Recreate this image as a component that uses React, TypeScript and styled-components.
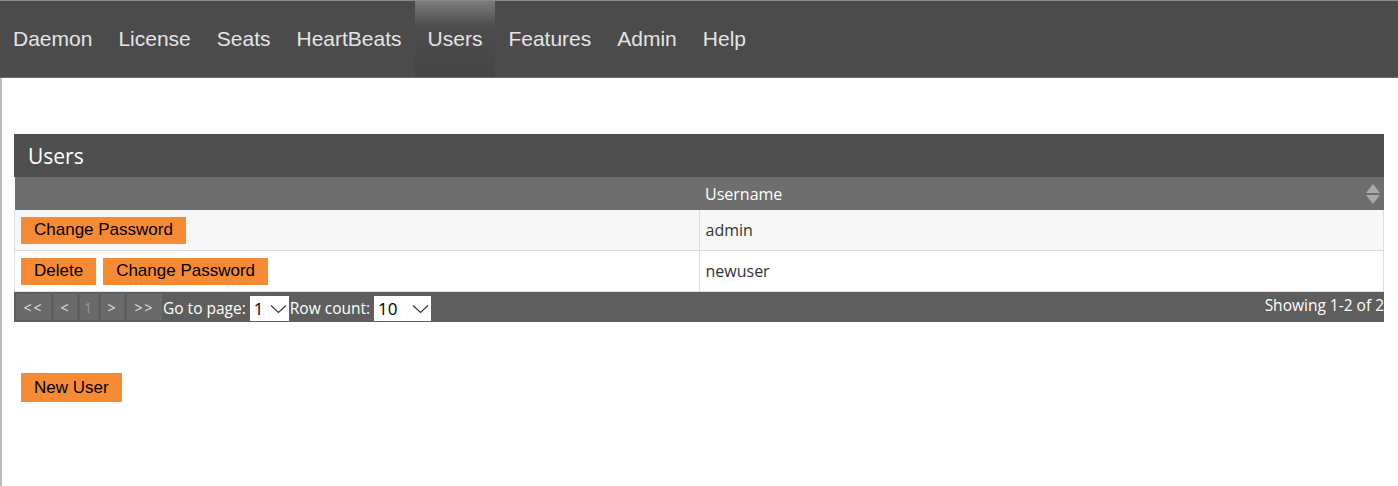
import styled, { createGlobalStyle } from "styled-components";

const GlobalStyle = createGlobalStyle`
  html, body {
    margin: 0;
    padding: 0;
    background: #ffffff;
  }
  body {
    font-family: "Open Sans", "Noto Sans", sans-serif;
  }
`;

const Page = styled.div`
  min-height: 486px;
  box-sizing: border-box;
  border-left: 2px solid #bdbdb6;
`;

const NavBar = styled.nav`
  display: flex;
  height: 78px;
  box-sizing: border-box;
  margin-left: -2px;
  background: #4b4b4b;
  border-top: 1px solid #8a8a8a;
  border-bottom: 1px solid #6c6c6c;
`;

const NavItem = styled.a<{ $active?: boolean }>`
  display: flex;
  align-items: center;
  padding: 0 13px 1px;
  font-family: "Liberation Sans", Arial, sans-serif;
  font-size: 21px;
  color: #e4e4e4;
  text-decoration: none;
  cursor: pointer;
  background: ${(p) =>
    p.$active
      ? "linear-gradient(#7c7c7c 0px, #4c4c4c 26px, #454545 100%)"
      : "transparent"};
`;

const Content = styled.main`
  padding: 56px 14px 0 12px;
`;

const Panel = styled.section`
  width: 100%;
`;

const PanelTitle = styled.div`
  height: 43px;
  display: flex;
  align-items: center;
  padding-left: 14px;
  background: #4f4f4f;
  color: #ffffff;
  font-size: 21px;
`;

const Grid = styled.table`
  width: 100%;
  border-collapse: collapse;
  table-layout: fixed;
  font-size: 16px;
`;

const HeadCell = styled.th`
  position: relative;
  height: 33px;
  padding: 0 6px;
  text-align: left;
  font-weight: normal;
  color: #ffffff;
  background: #6e6e6e;
`;

const SortIcon = styled.svg`
  position: absolute;
  right: 3px;
  top: 6px;
`;

const Row = styled.tr<{ $striped?: boolean }>`
  background: ${(p) => (p.$striped ? "#f7f7f7" : "#ffffff")};
`;

const Cell = styled.td`
  height: 28px;
  padding: 6px 6px;
  border: 1px solid #dedede;
  border-top: none;
  color: #333333;
  vertical-align: middle;
`;

const ActionButton = styled.button<{ $tall?: boolean }>`
  height: ${(p) => (p.$tall ? 29 : 27)}px;
  padding: 0 13px;
  margin-right: 7px;
  border: none;
  background: #f68b33;
  color: #000000;
  font-family: "Liberation Sans", Arial, sans-serif;
  font-size: 17px;
  cursor: pointer;
`;

const Footer = styled.div`
  display: flex;
  align-items: flex-start;
  height: 30px;
  box-sizing: border-box;
  padding: 2px 0 0 2px;
  background: #5e5e5e;
  color: #ffffff;
  font-size: 15.5px;
`;

const PagerButton = styled.span<{ $current?: boolean; $w: number }>`
  display: flex;
  align-items: center;
  justify-content: center;
  width: ${(p) => p.$w}px;
  height: 26px;
  margin-right: 3px;
  background: #6a6a6a;
  color: ${(p) => (p.$current ? "#9a9a9a" : "#e0e0e0")};
  letter-spacing: 2px;
  font-size: 14px;
`;

const FooterLabel = styled.span<{ $gap?: number }>`
  line-height: 30px;
  margin-top: -1px;
  margin-left: ${(p) => p.$gap ?? -2}px;
  margin-right: 4px;
`;

const SelectBox = styled.span<{ $w: number }>`
  position: relative;
  display: flex;
  align-items: center;
  width: ${(p) => p.$w}px;
  height: 25px;
  margin-top: 2px;
  box-sizing: border-box;
  padding-left: 4px;
  background: #ffffff;
  color: #000000;
  font-size: 17px;
`;

const Chevron = styled.svg`
  position: absolute;
  right: 2px;
  top: 8px;
`;

const Showing = styled.span`
  margin-left: auto;
`;

const NewUserArea = styled.div`
  padding: 51px 7px;
`;

const navItems = ["Daemon", "License", "Seats", "HeartBeats", "Users", "Features", "Admin", "Help"];

const users = [
  { name: "admin", deletable: false },
  { name: "newuser", deletable: true },
];

const Select: React.FC<{ value: string; width: number }> = ({ value, width }) => (
  <SelectBox $w={width}>
    {value}
    <Chevron width="17" height="10" viewBox="0 0 17 10">
      <path d="M1 1.5 L8.5 8.5 L16 1.5" fill="none" stroke="#333" strokeWidth="1.1" />
    </Chevron>
  </SelectBox>
);

const App = () => {
  return (
    <Page>
      <GlobalStyle />
      <NavBar>
        {navItems.map((item) => (
          <NavItem key={item} $active={item === "Users"}>
            {item}
          </NavItem>
        ))}
      </NavBar>
      <Content>
        <Panel>
          <PanelTitle>Users</PanelTitle>
          <Grid>
            <thead>
              <tr>
                <HeadCell></HeadCell>
                <HeadCell>
                  Username
                  <SortIcon width="16" height="22" viewBox="0 0 16 22">
                    <path d="M8 1 L15 10 L1 10 Z" fill="#a9a9a9" />
                    <path d="M1 12 L15 12 L8 21 Z" fill="#a9a9a9" />
                  </SortIcon>
                </HeadCell>
              </tr>
            </thead>
            <tbody>
              {users.map((u, i) => (
                <Row key={u.name} $striped={i % 2 === 0}>
                  <Cell>
                    {u.deletable && <ActionButton>Delete</ActionButton>}
                    <ActionButton>Change Password</ActionButton>
                  </Cell>
                  <Cell>{u.name}</Cell>
                </Row>
              ))}
            </tbody>
          </Grid>
          <Footer>
            <PagerButton $w={35}>&lt;&lt;</PagerButton>
            <PagerButton $w={23}>&lt;</PagerButton>
            <PagerButton $w={18} $current>1</PagerButton>
            <PagerButton $w={23}>&gt;</PagerButton>
            <PagerButton $w={35}>&gt;&gt;</PagerButton>
            <FooterLabel>Go to page:</FooterLabel>
            <Select value="1" width={39} />
            <FooterLabel $gap={1}>Row count:</FooterLabel>
            <Select value="10" width={57} />
            <Showing>Showing 1-2 of 2</Showing>
          </Footer>
        </Panel>
        <NewUserArea>
          <ActionButton $tall>New User</ActionButton>
        </NewUserArea>
      </Content>
    </Page>
  );
};

export default App;
